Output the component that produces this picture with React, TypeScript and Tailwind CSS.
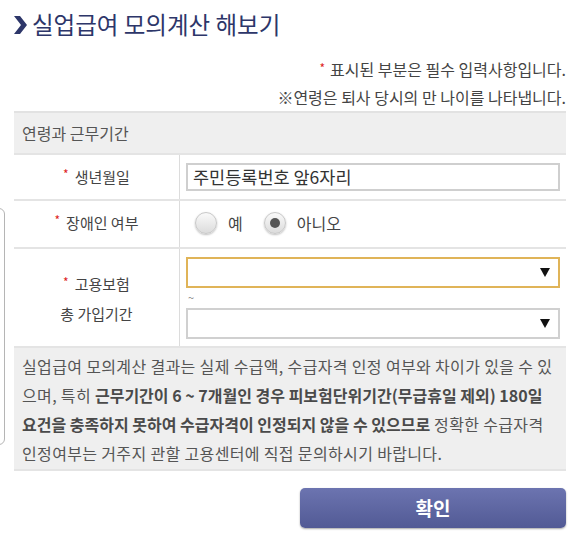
import React from "react";

const font = { fontFamily: '"Noto Sans CJK KR", "Noto Sans", sans-serif' };

function Star() {
  return <span className="text-[#d22] text-[12px] relative top-[-3px] mr-[6px]">*</span>;
}

function Radio({ checked }: { checked?: boolean }) {
  return (
    <span className="w-[22px] h-[22px] rounded-full border border-[#c8c8c8] bg-gradient-to-b from-[#fafafa] to-[#dcdcdc] shadow-[0_1px_2px_rgba(0,0,0,0.25)] flex items-center justify-center">
      {checked && <span className="w-[10px] h-[10px] rounded-full bg-[#555]" />}
    </span>
  );
}

function Arrow() {
  return (
    <svg width="10" height="9" viewBox="0 0 10 9">
      <polygon points="0,0 10,0 5,9" fill="#111" />
    </svg>
  );
}

export default function App() {
  return (
    <div className="relative w-[579px] h-[536px] bg-white overflow-hidden text-[#444]" style={font}>
      <div className="absolute left-[-14px] top-[208px] w-[19px] h-[237px] border-[1.5px] border-[#b5b5b5] rounded-[6px]" />
      <div className="flex items-center pl-[13px] pt-[0px] h-[50px]">
        <svg width="15" height="20" viewBox="0 0 15 20" className="mr-[4px]">
          <polygon points="1,1 7,1 14,10 7,19 1,19 8,10" fill="#2d3669" />
        </svg>
        <span className="text-[23.5px] text-[#2d3669] leading-none">실업급여 모의계산 해보기</span>
      </div>
      <div className="pr-[13px] pt-[6px] text-[16px] leading-[27px] text-right text-[#444]">
        <div>
          <span className="text-[#d22] text-[12px] relative top-[-3px] mr-[5px]">*</span>표시된 부분은 필수 입력사항입니다.
        </div>
        <div>※연령은 퇴사 당시의 만 나이를 나타냅니다.</div>
      </div>
      <div className="mx-[14px] mt-[0px] w-[552px]">
        <div className="h-[42px] border-t-2 border-[#e2e2e2] bg-[#efefef] flex items-center pl-[8px] text-[16px] text-[#555]">
          연령과 근무기간
        </div>
        <div className="flex h-[46px] border-t-2 border-[#e4e4e4]">
          <div className="w-[166px] border-r border-[#dcdcdc] flex items-center justify-center text-[15px]">
            <Star />생년월일
          </div>
          <div className="flex-1 flex items-center pl-[6px] pr-[6px]">
            <div className="w-full h-[28px] border-2 border-[#cfcfcf] flex items-center pl-[5px] text-[17.5px] text-[#333]">
              주민등록번호 앞6자리
            </div>
          </div>
        </div>
        <div className="flex h-[48px] border-t-2 border-[#e4e4e4]">
          <div className="w-[166px] border-r border-[#dcdcdc] flex items-center justify-center text-[15px] pb-[2px]">
            <Star />장애인 여부
          </div>
          <div className="flex-1 flex items-center pl-[15px] text-[16px] pb-[2px]">
            <Radio />
            <span className="ml-[11px] mr-[10px]">예</span>
            <span className="ml-[11px]"><Radio checked /></span>
            <span className="ml-[11px]">아니오</span>
          </div>
        </div>
        <div className="flex h-[99px] border-t-2 border-[#e4e4e4]">
          <div className="w-[166px] border-r border-[#dcdcdc] flex flex-col items-center justify-center text-[15px] leading-[29px] pt-[2px]">
            <div><Star />고용보험</div>
            <div>총 가입기간</div>
          </div>
          <div className="flex-1 flex flex-col pl-[6px] pr-[6px] pt-[8px]">
            <div className="w-full h-[31px] border-2 border-[#e0b458] flex items-center justify-end pr-[8px]"><Arrow /></div>
            <div className="h-[20px] text-[11px] text-[#888] pl-[2px] leading-[18px]">~</div>
            <div className="w-full h-[31px] border-2 border-[#d0d0d0] flex items-center justify-end pr-[8px]"><Arrow /></div>
          </div>
        </div>
        <div className="h-[125px] border-t-2 border-b-2 border-[#e4e4e4] bg-[#efefef] pl-[8px] pt-[4px] text-[16px] leading-[29px] text-[#555] tracking-[0.35px]">
          <div>실업급여 모의계산 결과는 실제 수급액, 수급자격 인정 여부와 차이가 있을 수 있</div>
          <div>으며, 특히 <b className="font-bold text-[#4a4a4a] tracking-[0px]">근무기간이 6 ~ 7개월인 경우 피보험단위기간(무급휴일 제외) 180일</b></div>
          <div><b className="font-bold text-[#4a4a4a] tracking-[0px]">요건을 충족하지 못하여 수급자격이 인정되지 않을 수 있으므로</b> 정확한 수급자격</div>
          <div>인정여부는 거주지 관할 고용센터에 직접 문의하시기 바랍니다.</div>
        </div>
      </div>
      <div className="flex justify-end pr-[13px] mt-[17px]">
        <div className="w-[266px] h-[40px] rounded-[5px] bg-gradient-to-b from-[#6c74b0] to-[#525a95] shadow-[0_1px_2px_rgba(0,0,0,0.35)] flex items-center justify-center text-white text-[19px] font-bold">
          확인
        </div>
      </div>
    </div>
  );
}
